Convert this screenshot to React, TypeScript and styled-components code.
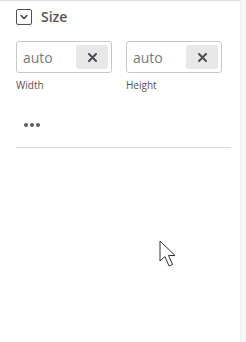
import React from "react";
import styled, { createGlobalStyle } from "styled-components";

const Global = createGlobalStyle`
  html, body { margin: 0; padding: 0; background: #fff; }
  body { font-family: "Open Sans", "Noto Sans", sans-serif; }
`;

const Page = styled.div`
  position: relative;
  width: 246px;
  height: 342px;
  display: flex;
  background: #fff;
  overflow: hidden;
`;

const Panel = styled.div`
  flex: 1;
  border-top: 1px solid #dcdcdc;
  padding: 0 9px 0 16px;
  display: flex;
  flex-direction: column;
`;

const RightStrip = styled.div`
  width: 6px;
  background: #f7f7f7;
  border-left: 1px solid #f0f0f0;
`;

const Header = styled.div`
  display: flex;
  align-items: center;
  gap: 9px;
  margin-top: 8px;
  height: 16px;
`;

const ToggleBox = styled.div`
  width: 14px;
  height: 14px;
  border: 1px solid #555;
  border-radius: 2px;
  display: flex;
  align-items: center;
  justify-content: center;
`;

const Title = styled.span`
  font-size: 14px;
  font-weight: 600;
  color: #555;
  line-height: 16px;
`;

const Fields = styled.div`
  display: flex;
  gap: 14px;
  margin-top: 16px;
`;

const Field = styled.div`
  display: flex;
  flex-direction: column;
`;

const InputBox = styled.div`
  width: 96px;
  height: 32px;
  box-sizing: border-box;
  border: 1px solid #c8c8c8;
  border-radius: 3px;
  display: flex;
  align-items: center;
  justify-content: space-between;
  padding: 0 3px 0 6px;
`;

const Value = styled.span`
  font-size: 14px;
  color: #7a7a7a;
`;

const Clear = styled.div`
  width: 32px;
  height: 24px;
  background: #e8e8e8;
  border-radius: 3px;
  display: flex;
  align-items: center;
  justify-content: center;
`;

const Label = styled.span`
  font-size: 10px;
  color: #555;
  margin-top: 5px;
`;

const Dots = styled.div`
  display: flex;
  gap: 2px;
  margin: 31px 0 0 8px;
`;

const Dot = styled.span`
  width: 4px;
  height: 4px;
  border-radius: 50%;
  background: #5a5d64;
`;

const Divider = styled.div`
  height: 1px;
  background: #d8d8d8;
  margin-top: 20px;
  width: 215px;
`;

const Cursor = styled.svg`
  position: absolute;
  left: 159px;
  top: 240px;
`;

function SizeField({ label }: { label: string }) {
  return (
    <Field>
      <InputBox>
        <Value>auto</Value>
        <Clear>
          <svg width="9" height="9" viewBox="0 0 9 9">
            <path d="M1 1L8 8M8 1L1 8" stroke="#4a4d55" strokeWidth="2" strokeLinecap="round" />
          </svg>
        </Clear>
      </InputBox>
      <Label>{label}</Label>
    </Field>
  );
}

export default function App() {
  return (
    <>
      <Global />
      <Page>
        <Panel>
          <Header>
            <ToggleBox>
              <svg width="10" height="10" viewBox="0 0 10 10">
                <path d="M2 3.5L5 6.5L8 3.5" stroke="#444" strokeWidth="1.5" fill="none" strokeLinecap="round" strokeLinejoin="round" />
              </svg>
            </ToggleBox>
            <Title>Size</Title>
          </Header>
          <Fields>
            <SizeField label="Width" />
            <SizeField label="Height" />
          </Fields>
          <Dots>
            <Dot />
            <Dot />
            <Dot />
          </Dots>
          <Divider />
        </Panel>
        <RightStrip />
        <Cursor width="22" height="30" viewBox="0 0 22 30">
          <path d="M1 1L1 21L6 16.5L10 26L13.5 24.5L9.5 15.5L16 15.5Z" fill="#fff" stroke="#333" strokeWidth="1" strokeLinejoin="round" />
        </Cursor>
      </Page>
    </>
  );
}
